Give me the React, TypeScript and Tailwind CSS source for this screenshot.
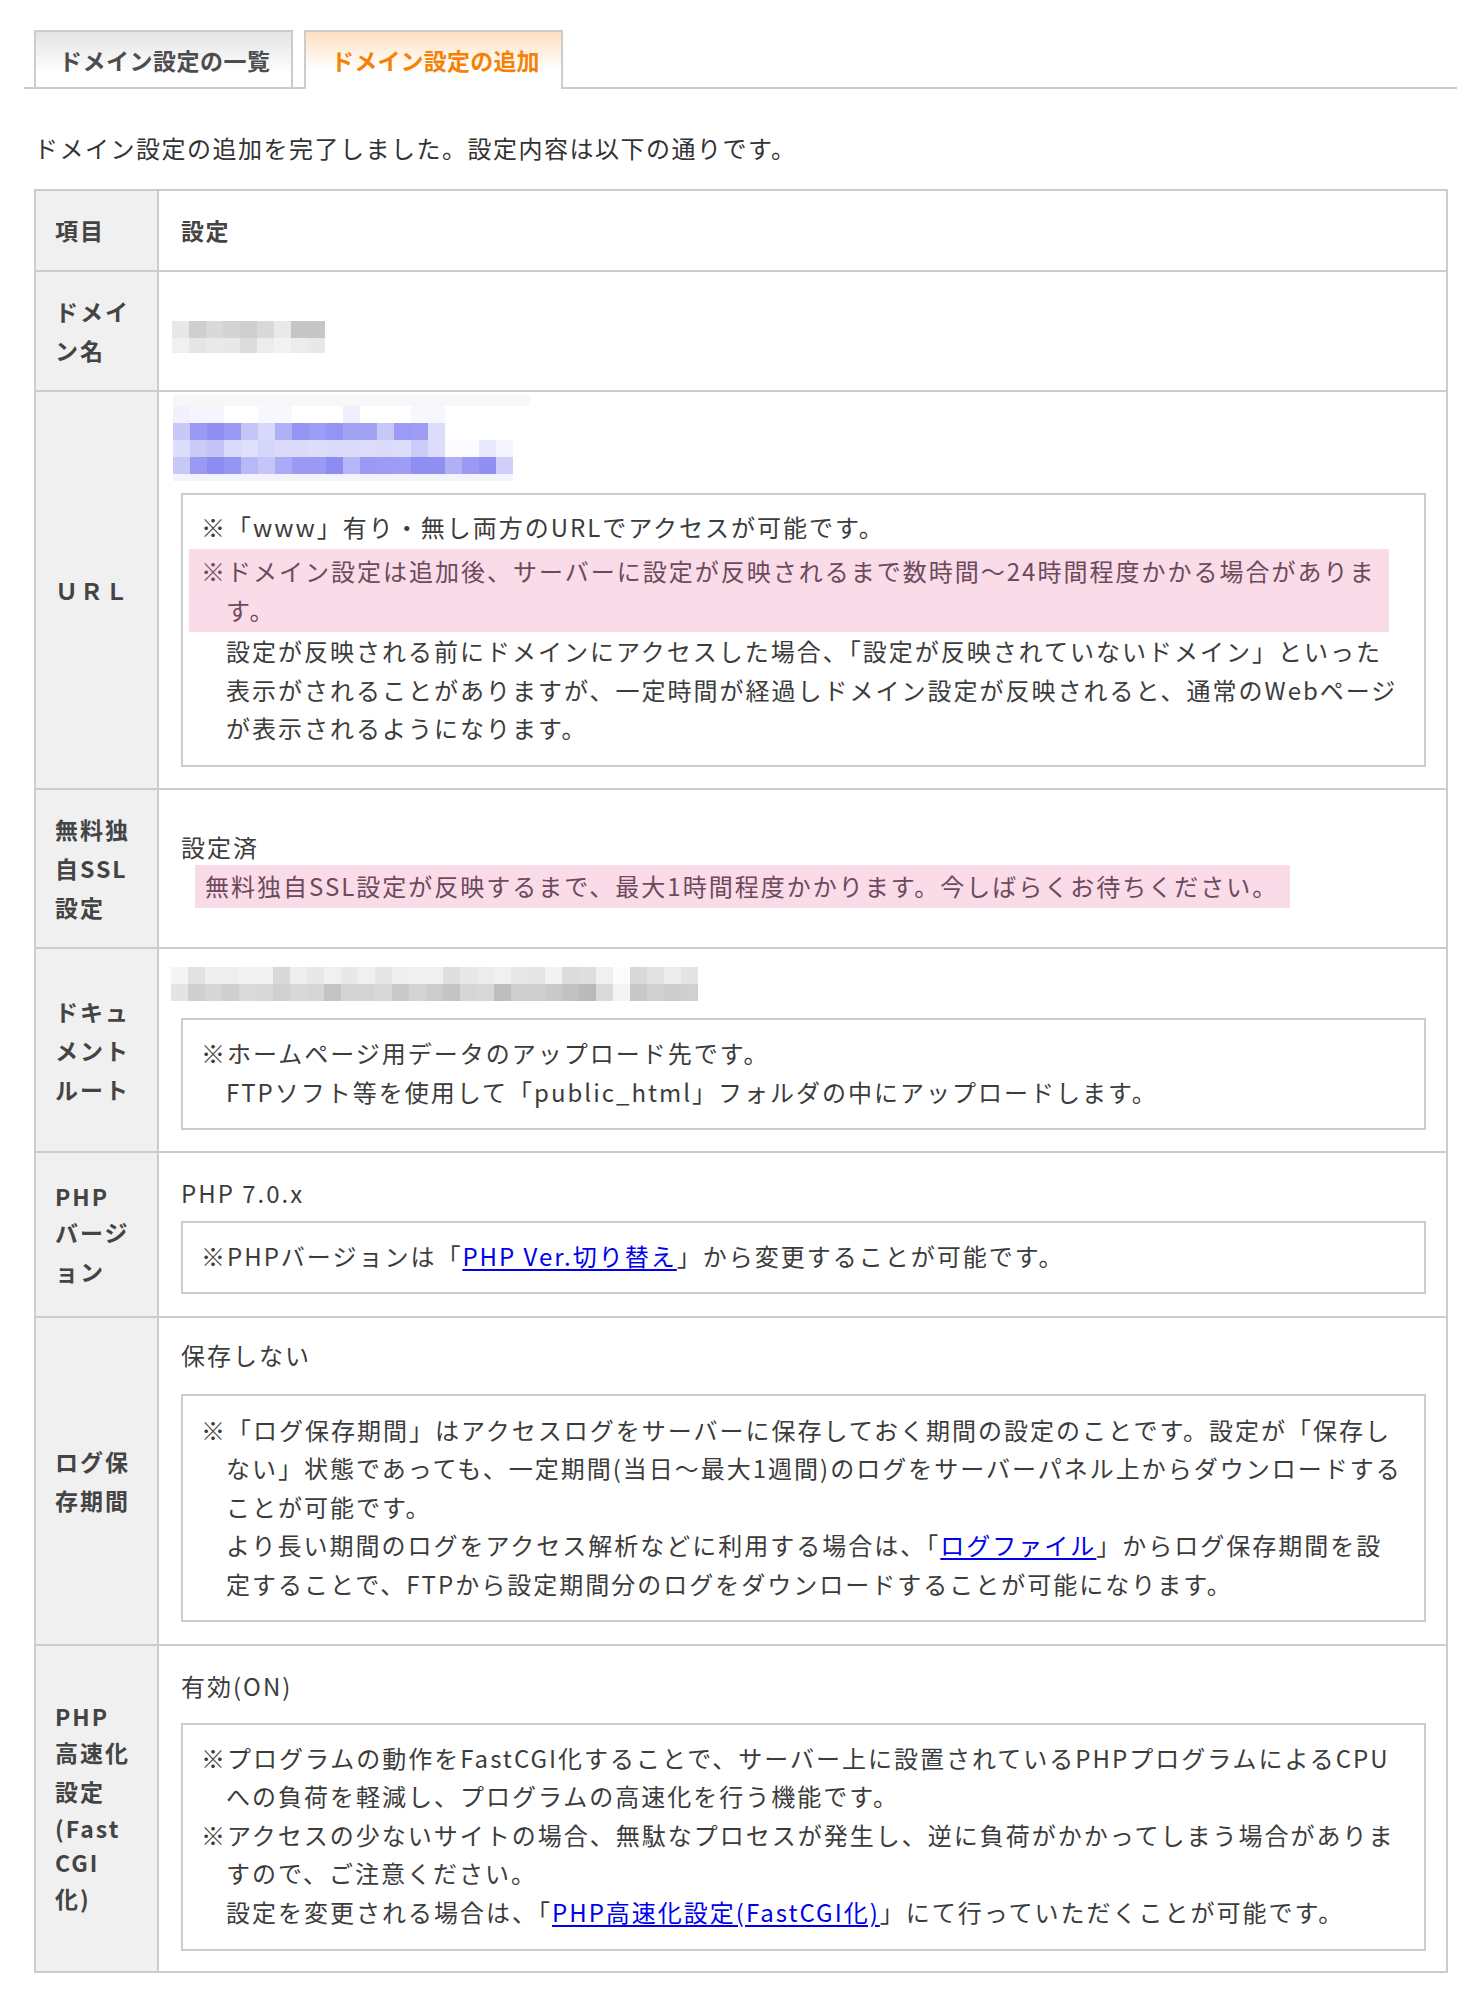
import type { ReactNode } from "react";

type MosaicRow = { h: number; c: string[] };

const domainBlur: MosaicRow[] = [
  { h: 17, c: ["#e8e8e8", "#cfcfcf", "#d9d9d9", "#d3d3d3", "#cfcfcf", "#d9d9d9", "#e9e9e9", "#c6c6c6", "#c6c6c6"] },
  { h: 15, c: ["#f0f0f0", "#e5e5e5", "#e9e9e9", "#e8e8e8", "#dcdcdc", "#ececec", "#f2f2f2", "#ececec", "#e8e8e8"] },
];

const urlBlur: MosaicRow[] = [
  { h: 11, c: Array(21).fill("#f7f7fa") },
  { h: 17, c: ["#f2f2fd", "#f5f5fe", "#f5f5fe", "#ffffff", "#ffffff", "#f7f7fe", "#f7f7fe", "#ffffff", "#ffffff", "#ffffff", "#eeeefd", "#ffffff", "#ffffff", "#ffffff", "#f7f7fe", "#f7f7fe"] },
  { h: 17, c: ["#c8c8f8", "#9a9af5", "#8f8ff3", "#9999f5", "#c5c5f8", "#d8d8fa", "#b0b0f6", "#9494f4", "#9d9df5", "#9494f4", "#a2a2f5", "#a2a2f5", "#c8c8f8", "#9b9bf5", "#9d9df5", "#dcdcfb"] },
  { h: 17, c: ["#dcdcfb", "#cacaf9", "#c4c4f8", "#dadafa", "#e0e0fb", "#d6d6fa", "#dadafa", "#dadafa", "#dcdcfb", "#dadafa", "#dadafa", "#dcdcfb", "#dadafa", "#dcdcfb", "#cbcbf9", "#dcdcfb", "#fbfbff", "#fbfbff", "#e9e9fd", "#f5f5fe"] },
  { h: 17, c: ["#c8c8f8", "#9a9af5", "#8c8cf3", "#9595f4", "#b8b8f7", "#c5c5f8", "#aaaaf6", "#9a9af5", "#9a9af5", "#8c8cf3", "#b5b5f7", "#9a9af5", "#9c9cf5", "#9d9df5", "#8f8ff3", "#9090f3", "#b0b0f6", "#9a9af5", "#9090f3", "#cfcff9"] },
  { h: 7, c: Array(20).fill("#f3f3fd") },
];

const docBlur: MosaicRow[] = [
  {
    h: 17,
    c: ["#f5f5f5", "#e2e2e2", "#eeeeee", "#eeeeee", "#f2f2f2", "#f2f2f2", "#d8d8d8", "#eeeeee", "#e8e8e8", "#f0f0f0", "#e8e8e8", "#f0f0f0", "#e6e6e6", "#eeeeee", "#f0f0f0", "#f0f0f0", "#dedede", "#e8e8e8", "#ececec", "#f0f0f0", "#e8e8e8", "#e6e6e6", "#f3f3f3", "#dcdcdc", "#dedede", "#f0f0f0", "#fcfcfc", "#d8d8d8", "#e2e2e2", "#ececec", "#e4e4e4"],
  },
  {
    h: 17,
    c: ["#e4e4e4", "#cfcfcf", "#d6d6d6", "#cfcfcf", "#dadada", "#d8d8d8", "#d0d0d0", "#d8d8d8", "#d6d6d6", "#c4c4c4", "#d4d4d4", "#d4d4d4", "#d8d8d8", "#cacaca", "#d4d4d4", "#cccccc", "#c4c4c4", "#d6d6d6", "#d8d8d8", "#bebebe", "#cecece", "#cecece", "#cacaca", "#c2c2c2", "#bababa", "#dadada", "#f4f4f4", "#c8c8c8", "#d0d0d0", "#cdcdcd", "#d0d0d0"],
  },
];

function Mosaic({ rows, className }: { rows: MosaicRow[]; className?: string }) {
  return (
    <div className={"flex flex-col " + (className ?? "")}>
      {rows.map((r, i) => (
        <div key={i} className="flex" style={{ height: r.h }}>
          {r.c.map((c, j) => (
            <div key={j} className="w-[17px] shrink-0" style={{ backgroundColor: c }} />
          ))}
        </div>
      ))}
    </div>
  );
}

type Line = { t: string; latin?: boolean };

function Label({ lines }: { lines: Line[] }) {
  return (
    <div className="w-[123px] shrink-0 bg-[#f0f0f0] border-r-2 border-[#cccccc] flex flex-col justify-center pl-[19px] text-[23px] font-bold tracking-[2px] text-[#444444]">
      {lines.map((l, i) => (
        <div key={i} className={l.latin ? "h-[34px] leading-[34px]" : "h-[39px] leading-[39px]"}>
          {l.t}
        </div>
      ))}
    </div>
  );
}

// row height includes its 2px top border
function Row({ h, label, pt, children }: { h: string; label: Line[]; pt: string; children: ReactNode }) {
  return (
    <div className={"flex border-t-2 border-[#cccccc] " + h}>
      <Label lines={label} />
      <div className={"flex-1 pl-[22px] pr-[20px] " + pt}>{children}</div>
    </div>
  );
}

function Box({ className, children }: { className: string; children: ReactNode }) {
  return (
    <div className={"border-2 border-[#cccccc] pl-[18px] pr-[10px] whitespace-nowrap " + className}>
      {children}
    </div>
  );
}

function Note({ children }: { children: ReactNode }) {
  return <div className="pl-[25px] indent-[-25px]">{children}</div>;
}

function Link({ children }: { children: ReactNode }) {
  return <a href="#" className="text-[#0000ee] underline underline-offset-[3px]">{children}</a>;
}

export default function App() {
  return (
    <div className="w-[1476px] min-h-[1994px] bg-white font-['Noto_Sans_CJK_JP','Noto_Sans_CJK_SC',sans-serif] pt-[30px]">
      {/* tabs */}
      <div className="ml-[24px] w-[1433px] flex items-end border-b-2 border-[#cccccc] pl-[10px] gap-[11px]">
        <div className="w-[259px] h-[57px] border-2 border-b-0 border-[#cccccc] bg-linear-to-b from-[#e4e4e4] to-white to-75% flex items-center pt-[2px] pl-[23px] text-[23px] font-bold tracking-[0.5px] text-[#4d4d4d]">
          ドメイン設定の一覧
        </div>
        <div className="w-[259px] h-[59px] -mb-[2px] border-2 border-b-0 border-[#cccccc] bg-linear-to-b from-[#fde0bf] to-white to-65% flex items-center pl-[25px] text-[23px] font-bold tracking-[0.2px] text-[#f58207]">
          ドメイン設定の追加
        </div>
      </div>

      <p className="ml-[34px] mt-[40px] h-[38px] leading-[38px] text-[24px] tracking-[1.5px] text-[#333333]">
        ドメイン設定の追加を完了しました。設定内容は以下の通りです。
      </p>

      {/* table */}
      <div className="ml-[34px] mt-[22px] w-[1414px] border-2 border-[#cccccc] text-[24px] leading-[38.5px] tracking-[2px] text-[#3c3c3c]">
        <div className="flex h-[79px]">
          <Label lines={[{ t: "項目" }]} />
          <div className="flex-1 flex items-center pl-[22px] text-[23px] font-bold tracking-[1.5px] text-[#444444]">設定</div>
        </div>

        <Row h="h-[120px]" pt="pt-[49px]" label={[{ t: "ドメイ" }, { t: "ン名" }]}>
          <Mosaic rows={domainBlur} className="-ml-[9px]" />
        </Row>

        <Row h="h-[398px]" pt="pt-[3px]" label={[{ t: "ＵＲＬ" }]}>
          <Mosaic rows={urlBlur} className="-ml-[8px]" />
          <Box className="mt-[12px] pt-[13px] pb-[17px]">
            <Note>※「www」有り・無し両方のURLでアクセスが可能です。</Note>
            <div className="mt-[2.5px] -ml-[12px] mr-[25px] bg-[#fadbe8] py-[3px] pl-[12px] text-[#6c4a5c]">
              <Note>
                ※ドメイン設定は追加後、サーバーに設定が反映されるまで数時間〜24時間程度かかる場合がありま
                <br />
                す。
              </Note>
            </div>
            <div className="pl-[25px]">
              設定が反映される前にドメインにアクセスした場合、「設定が反映されていないドメイン」といった
              <br />
              表示がされることがありますが、一定時間が経過しドメイン設定が反映されると、通常のWebページ
              <br />
              が表示されるようになります。
            </div>
          </Box>
        </Row>

        <Row h="h-[159px]" pt="pt-[38px]" label={[{ t: "無料独" }, { t: "自SSL" }, { t: "設定" }]}>
          <div className="leading-[37px]">設定済</div>
          <div className="ml-[14px] inline-block bg-[#fadbe8] py-[2px] pl-[10px] pr-[12px] text-[#6c4a5c]">
            無料独自SSL設定が反映するまで、最大1時間程度かかります。今しばらくお待ちください。
          </div>
        </Row>

        <Row h="h-[204px]" pt="pt-[18px]" label={[{ t: "ドキュ" }, { t: "メント" }, { t: "ルート" }]}>
          <Mosaic rows={docBlur} className="-ml-[10px]" />
          <Box className="mt-[17px] pt-[14px] pb-[17px]">
            <Note>
              ※ホームページ用データのアップロード先です。
              <br />
              FTPソフト等を使用して「public_html」フォルダの中にアップロードします。
            </Note>
          </Box>
        </Row>

        <Row h="h-[165px]" pt="pt-[21px]" label={[{ t: "PHP", latin: true }, { t: "バージ" }, { t: "ョン" }]}>
          <div>PHP 7.0.x</div>
          <Box className="mt-[8px] pt-[14px] pb-[17px]">
            <Note>
              ※PHPバージョンは「<Link>PHP Ver.切り替え</Link>」から変更することが可能です。
            </Note>
          </Box>
        </Row>

        <Row h="h-[328px]" pt="pt-[18px]" label={[{ t: "ログ保" }, { t: "存期間" }]}>
          <div>保存しない</div>
          <Box className="mt-[19px] pt-[15px] pb-[17px]">
            <Note>
              ※「ログ保存期間」はアクセスログをサーバーに保存しておく期間の設定のことです。設定が「保存し
              <br />
              ない」状態であっても、一定期間(当日〜最大1週間)のログをサーバーパネル上からダウンロードする
              <br />
              ことが可能です。
              <br />
              より長い期間のログをアクセス解析などに利用する場合は、「<Link>ログファイル</Link>」からログ保存期間を設
              <br />
              定することで、FTPから設定期間分のログをダウンロードすることが可能になります。
            </Note>
          </Box>
        </Row>

        <Row
          h="h-[327px]"
          pt="pt-[21px]"
          label={[
            { t: "PHP", latin: true },
            { t: "高速化" },
            { t: "設定" },
            { t: "(Fast", latin: true },
            { t: "CGI", latin: true },
            { t: "化)" },
          ]}
        >
          <div>有効(ON)</div>
          <Box className="mt-[17px] pt-[14px] pb-[18px]">
            <Note>
              ※プログラムの動作をFastCGI化することで、サーバー上に設置されているPHPプログラムによるCPU
              <br />
              への負荷を軽減し、プログラムの高速化を行う機能です。
            </Note>
            <Note>
              ※アクセスの少ないサイトの場合、無駄なプロセスが発生し、逆に負荷がかかってしまう場合がありま
              <br />
              すので、ご注意ください。
              <br />
              設定を変更される場合は、「<Link>PHP高速化設定(FastCGI化)</Link>」にて行っていただくことが可能です。
            </Note>
          </Box>
        </Row>
      </div>
    </div>
  );
}
